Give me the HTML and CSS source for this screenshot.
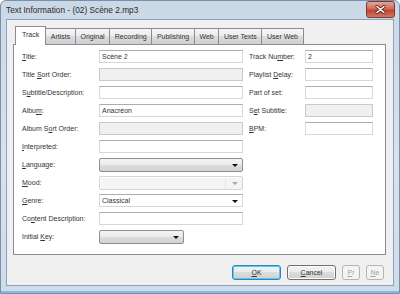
FILE: index.html
```html
<!DOCTYPE html>
<html>
<head>
    <title>Text Information</title>
    <link rel="stylesheet" href="styles.css">
</head>
<body>
    <div class="window">
        <div class="titlebar">
            <span class="caption">Text Information - (02) Scène 2.mp3</span>
            <div class="close">
                <svg width="11" height="9" viewBox="0 0 11 9">
                    <path d="M2 1.5 L9 7.5 M9 1.5 L2 7.5" stroke="#5a1f18" stroke-width="3" stroke-linecap="round"/>
                    <path d="M2 1.5 L9 7.5 M9 1.5 L2 7.5" stroke="#ffffff" stroke-width="1.6" stroke-linecap="round"/>
                </svg>
            </div>
        </div>

        <div class="client">
            <div class="tabs">
                <div class="tab active">Track</div>
                <div class="tab">Artists</div>
                <div class="tab">Original</div>
                <div class="tab">Recording</div>
                <div class="tab">Publishing</div>
                <div class="tab">Web</div>
                <div class="tab">User Texts</div>
                <div class="tab">User Web</div>
            </div>

            <div class="panel">
                <div class="form left">
                    <label><u>T</u>itle:</label>
                    <div class="edit">Scène 2</div>

                    <label>Title <u>S</u>ort Order:</label>
                    <div class="edit disabled"></div>

                    <label>S<u>u</u>btitle/Description:</label>
                    <div class="edit"></div>

                    <label>Albu<u>m</u>:</label>
                    <div class="edit">Anacréon</div>

                    <label>Album S<u>o</u>rt Order:</label>
                    <div class="edit disabled"></div>

                    <label><u>I</u>nterpreted:</label>
                    <div class="edit"></div>

                    <label><u>L</u>anguage:</label>
                    <div class="combo list"><span class="arrow"></span></div>

                    <label><u>M</u>ood:</label>
                    <div class="combo disabled"><span class="arrow"></span></div>

                    <label><u>G</u>enre:</label>
                    <div class="combo editable">Classical<span class="arrow"></span></div>

                    <label>Co<u>n</u>tent Description:</label>
                    <div class="edit"></div>

                    <label>Initial <u>K</u>ey:</label>
                    <div class="combo list short"><span class="arrow"></span></div>
                </div>

                <div class="form right">
                    <label>Track Nu<u>m</u>ber:</label>
                    <div class="edit">2</div>

                    <label>Playlist <u>D</u>elay:</label>
                    <div class="edit"></div>

                    <label>Part of set:</label>
                    <div class="edit"></div>

                    <label>S<u>e</u>t Subtitle:</label>
                    <div class="edit disabled"></div>

                    <label><u>B</u>PM:</label>
                    <div class="edit"></div>
                </div>
            </div>

            <div class="buttons">
                <div class="btn default"><u>O</u>K</div>
                <div class="btn"><u>C</u>ancel</div>
                <div class="btn small off"><u>P</u>r</div>
                <div class="btn small off"><u>N</u>e</div>
            </div>
        </div>
    </div>
</body>
</html>
```

FILE: styles.css
```css
body {
    margin: 0;
    font-family: "Liberation Sans", Arial, sans-serif;
    font-size: 7px;
    color: #333;
}

.window {
    width: 400px;
    height: 294px;
    box-sizing: border-box;
    border: 1px solid #7890aa;
    border-radius: 6px 6px 0 0;
    background: linear-gradient(to bottom, #cbd8e6, #d9e2ec 55%, #cfdce9);
    box-shadow: inset 0 -2px 0 #8fb8da;
    padding: 0 5px 7px 5px;
    display: flex;
    flex-direction: column;
}

.titlebar {
    height: 18px;
    display: flex;
    align-items: flex-start;
}

.caption {
    font-size: 8.3px;
    color: #2a2a2a;
    line-height: 18px;
}

.close {
    margin-left: auto;
    margin-right: -1px;
    width: 29px;
    height: 17px;
    box-sizing: border-box;
    border: 1px solid #7a3a33;
    border-radius: 3px;
    background: linear-gradient(to bottom, #e6a497, #d36a5a 45%, #c2432f 55%, #d27763);
    display: flex;
    align-items: center;
    justify-content: center;
}

.client {
    flex: 1;
    background: #f0f0f0;
    border: 1px solid #8aa2bc;
    padding: 6px 7px 0 6px;
}

.tabs {
    display: flex;
    align-items: flex-end;
    height: 18px;
    padding-left: 2px;
    position: relative;
    z-index: 1;
}

.tab {
    height: 15px;
    line-height: 15px;
    padding: 0 4.6px;
    border: 1px solid #898c95;
    border-bottom: none;
    margin-right: -1px;
    background: linear-gradient(to bottom, #f5f5f5, #ebebeb 50%, #dddddd 50%, #cfcfcf);
}

.tab.active {
    height: 18px;
    line-height: 16px;
    margin-bottom: -1px;
    padding: 0 6px;
    background: #fff;
    position: relative;
    z-index: 2;
}

.panel {
    height: 211px;
    box-sizing: border-box;
    border: 1px solid #898c95;
    background: #fff;
    padding: 5px 8px;
    display: flex;
    gap: 6px;
}

.form {
    display: grid;
    grid-auto-rows: 18px;
    align-items: start;
}

.left {
    grid-template-columns: 77px 144px;
}

.right {
    grid-template-columns: 56px 68px;
}

label {
    line-height: 13px;
}

.edit {
    height: 13px;
    box-sizing: border-box;
    border: 1px solid #d5d9df;
    border-top-color: #abadb3;
    background: #fff;
    padding-left: 2px;
    line-height: 11px;
}

.edit.disabled {
    background: #f0f0f0;
    border-color: #c9c9c9;
}

.combo {
    position: relative;
    height: 14px;
    box-sizing: border-box;
    border: 1px solid #8f8f8f;
    border-radius: 2px;
    padding-left: 3px;
    line-height: 12px;
}

.combo.list {
    background: linear-gradient(to bottom, #f3f3f3, #ebebeb 50%, #dddddd 50%, #d1d1d1);
}

.combo.short {
    width: 85px;
}

.combo.disabled {
    background: #f4f4f4;
    border-color: #d3d3d3;
    box-shadow: inset 1px 1px 0 #fff, inset -16px 0 0 #f4f4f4, inset -17px 0 0 #e6e6e6;
}

.combo.editable {
    height: 13px;
    border-color: #d5d9df;
    border-top-color: #abadb3;
    border-radius: 0;
    background: #fff;
    padding-left: 2px;
    line-height: 11px;
}

.arrow {
    position: absolute;
    right: 4px;
    top: 50%;
    margin-top: -1px;
    border-left: 3px solid transparent;
    border-right: 3px solid transparent;
    border-top: 3px solid #111;
}

.combo.disabled .arrow {
    border-top-color: #a8a8a8;
}

.buttons {
    display: flex;
    justify-content: flex-end;
    gap: 6px;
    margin-top: 10px;
    padding-right: 2px;
}

.btn {
    width: 49px;
    height: 15px;
    box-sizing: border-box;
    border: 1px solid #707070;
    border-radius: 3px;
    background: linear-gradient(to bottom, #f2f2f2, #ebebeb 50%, #dddddd 50%, #cfcfcf);
    box-shadow: inset 0 0 0 1px #fcfcfc;
    text-align: center;
    line-height: 13px;
}

.btn.default {
    border-color: #3c7fb1;
    box-shadow: inset 0 0 0 1px #48d2f8;
}

.btn.small {
    width: 18px;
}

.btn.off {
    border-color: #b5b5b5;
    background: #f4f4f4;
    box-shadow: none;
    color: #a3a3a3;
}
```
